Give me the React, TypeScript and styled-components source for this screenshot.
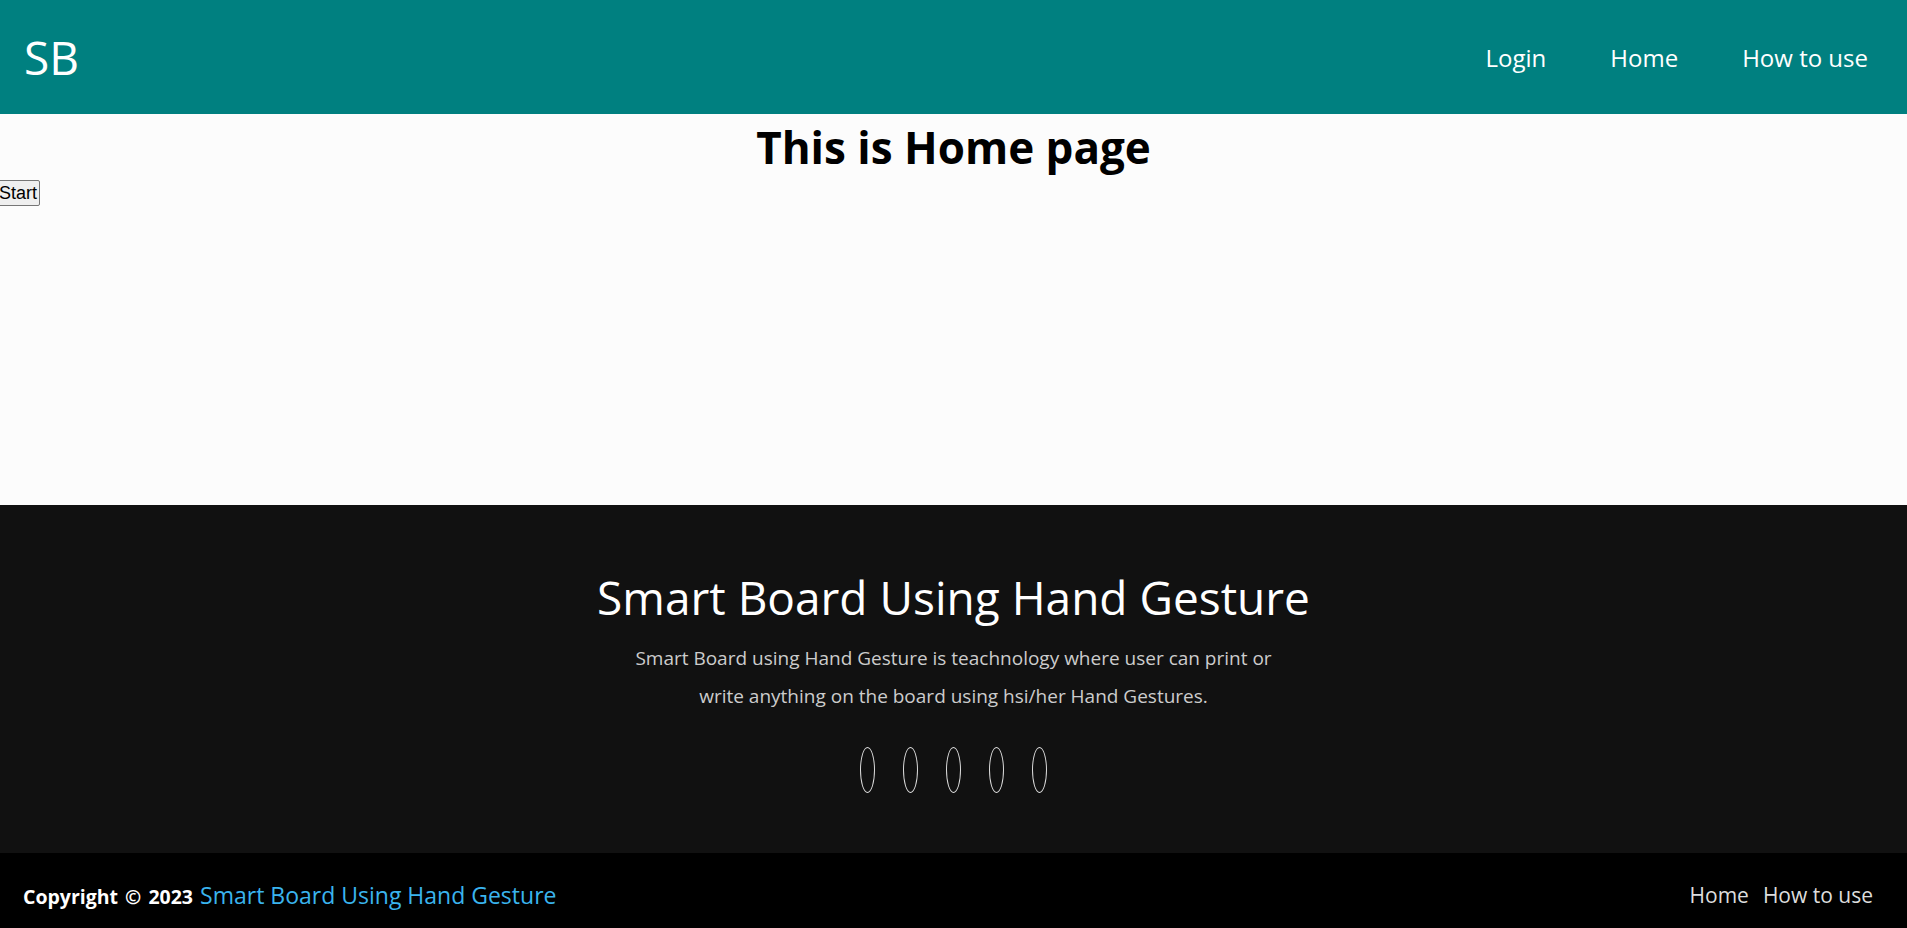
import styled, { createGlobalStyle } from "styled-components";

const GlobalStyle = createGlobalStyle`
  body {
    margin: 0;
    background: #fcfcfc;
    font-family: "Comic Sans MS", "Open Sans", sans-serif;
  }
  a {
    text-decoration: none;
    color: inherit;
  }
`;

const Navbar = styled.nav`
  height: 114px;
  background-color: #008080;
  display: flex;
  justify-content: space-between;
  align-items: center;
  padding: 0 39px 0 24px;
`;

const Logo = styled.div`
  color: #fff;
  font-size: 46px;
`;

const NavLinks = styled.ul`
  display: flex;
  gap: 64px;
  list-style: none;
  margin: 0;
  padding: 0;
`;

const NavLink = styled.li`
  color: #fff;
  font-size: 24px;
`;

const Main = styled.main`
  height: 391px;
  background: #fcfcfc;
`;

const Title = styled.h1`
  margin: 0;
  padding-top: 3px;
  text-align: center;
  font-size: 44px;
  line-height: 60px;
  color: #000;
`;

const StartButton = styled.button`
  margin: 3px 0 0 -4px;
  font-family: "Liberation Sans", Arial, sans-serif;
  font-size: 18px;
  padding: 1px 2px;
  height: 26px;
  background: #efefef;
  border: 1px solid #767676;
  border-radius: 2px;
  color: #000;
`;

const Footer = styled.footer`
  height: 348px;
  background: #111;
  display: flex;
  flex-direction: column;
  align-items: center;
  padding-top: 62px;
  box-sizing: border-box;
`;

const FooterTitle = styled.h2`
  margin: 0;
  color: #fff;
  font-weight: normal;
  font-size: 46px;
  line-height: 60px;
`;

const FooterText = styled.p`
  margin: 12px 0 0;
  max-width: 660px;
  text-align: center;
  color: #ccc;
  font-size: 19px;
  line-height: 38px;
`;

const Socials = styled.ul`
  display: flex;
  gap: 28px;
  list-style: none;
  margin: 32px 0 0;
  padding: 0;
`;

const SocialLink = styled.li`
  width: 13px;
  height: 44px;
  border: 1px solid #ddd;
  border-radius: 50%;
`;

const BottomBar = styled.div`
  height: 75px;
  box-sizing: border-box;
  padding: 8px 34px 0 23px;
  background: #000;
  display: flex;
  justify-content: space-between;
  align-items: center;
`;

const Copyright = styled.p`
  margin: 0;
  color: #fff;
  font-size: 19.5px;
  font-weight: bold;
  word-spacing: 2px;
`;

const Brand = styled.span`
  color: #3ab4ee;
  font-size: 23px;
  font-weight: normal;
  word-spacing: 0;
`;

const BottomLinks = styled.div`
  display: flex;
  gap: 14px;
  color: #ddd;
  font-size: 21px;
`;

export default function App() {
  return (
    <>
      <GlobalStyle />
      <Navbar>
        <Logo>SB</Logo>
        <NavLinks>
          <NavLink><a href="#">Login</a></NavLink>
          <NavLink><a href="#">Home</a></NavLink>
          <NavLink><a href="#">How to use</a></NavLink>
        </NavLinks>
      </Navbar>
      <Main>
        <Title>This is Home page</Title>
        <StartButton>Start</StartButton>
      </Main>
      <Footer>
        <FooterTitle>Smart Board Using Hand Gesture</FooterTitle>
        <FooterText>
          Smart Board using Hand Gesture is teachnology where user can print or write anything on the board using hsi/her Hand Gestures.
        </FooterText>
        <Socials>
          {[0, 1, 2, 3, 4].map((i) => (
            <SocialLink key={i} />
          ))}
        </Socials>
      </Footer>
      <BottomBar>
        <Copyright>
          Copyright © 2023 <Brand>Smart Board Using Hand Gesture</Brand>
        </Copyright>
        <BottomLinks>
          <a href="#">Home</a>
          <a href="#">How to use</a>
        </BottomLinks>
      </BottomBar>
    </>
  );
}
